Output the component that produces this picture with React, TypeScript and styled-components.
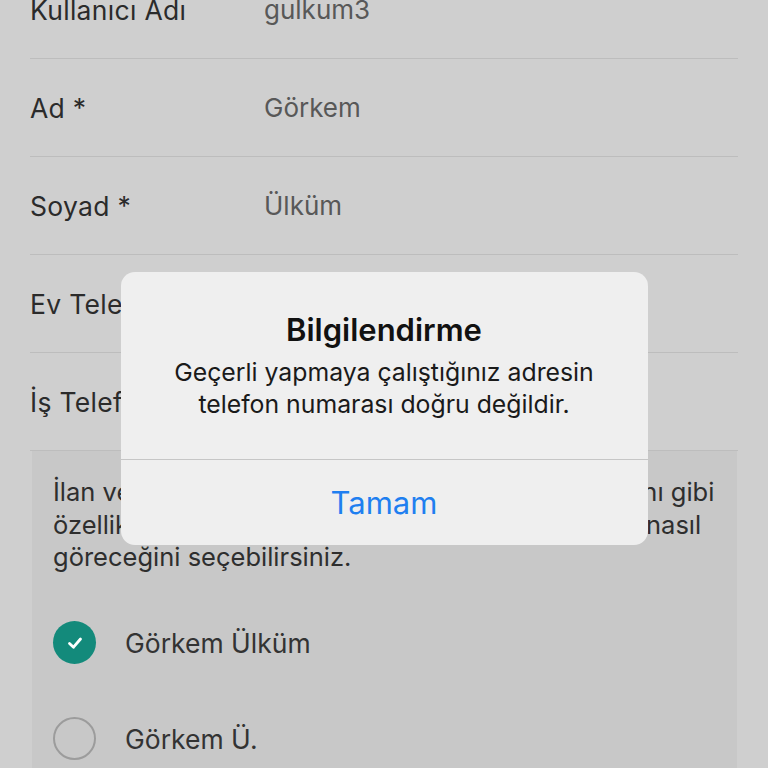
import React from 'react';
import styled, { createGlobalStyle } from 'styled-components';

const PAGE_BG = '#cfcfcf';
const PANEL_BG = '#c8c8c8';
const LINE = '#bdbdbd';
const TEAL = '#138a7b';
const IOS_BLUE = '#1f7ff0';

const GlobalStyle = createGlobalStyle`
  body {
    margin: 0;
    font-family: Inter, "Noto Sans", sans-serif;
    background: ${PAGE_BG};
  }
`;

const Screen = styled.div`
  position: relative;
  width: 768px;
  height: 768px;
  overflow: hidden;
  background: ${PAGE_BG};
`;

// list is scrolled, first row half hidden
const FormList = styled.div`
  margin-top: -39px;
  padding: 0 30px;
`;

const Row = styled.div`
  height: 97px;
  display: grid;
  grid-template-columns: 234px 1fr;
  align-items: center;
  border-bottom: 1px solid ${LINE};
`;

const Label = styled.div`
  font-size: 26.5px;
  letter-spacing: 0.3px;
  color: #2b2b2b;
`;

const Value = styled.div`
  font-size: 26px;
  color: #585858;
`;

const InfoPanel = styled.div`
  margin: 0 31px 0 32px;
  padding: 25px 21px 0;
  background: ${PANEL_BG};
`;

const Para = styled.p`
  margin: 0;
  font-size: 25.5px;
  line-height: 32.5px;
  color: #2e2e2e;
  white-space: nowrap;
`;

const Options = styled.div`
  margin-top: 21px;
`;

const Option = styled.div`
  height: 96px;
  display: flex;
  align-items: center;
  gap: 29px;
`;

const Radio = styled.div<{ checked?: boolean }>`
  width: 43px;
  height: 43px;
  box-sizing: border-box;
  border-radius: 50%;
  display: flex;
  align-items: center;
  justify-content: center;
  background: ${({ checked }) => (checked ? TEAL : 'transparent')};
  border: ${({ checked }) => (checked ? 'none' : '2px solid #9c9c9c')};
`;

const OptionText = styled.span`
  font-size: 26.5px;
  color: #333;
`;

const Overlay = styled.div`
  position: absolute;
  inset: 0;
  display: flex;
  justify-content: center;
  align-items: flex-start;
  padding-top: 272px;
`;

const Dialog = styled.div`
  width: 527px;
  border-radius: 14px;
  background: #efefef;
  overflow: hidden;
  text-align: center;
`;

const DialogBody = styled.div`
  padding: 40px 20px 39px;
  border-bottom: 1px solid #c6c6c6;
`;

const Title = styled.div`
  font-size: 31px;
  line-height: 36px;
  font-weight: 600;
  color: #111;
`;

const Message = styled.div`
  margin-top: 8px;
  font-size: 24.8px;
  line-height: 32px;
  color: #1a1a1a;
`;

const DialogButton = styled.div`
  height: 85px;
  display: flex;
  align-items: center;
  justify-content: center;
  font-size: 31px;
  color: ${IOS_BLUE};
`;

const Check = () => (
  <svg width="20" height="20" viewBox="0 0 20 20">
    <path d="M4.5 10.5 L8.5 14.2 L15.5 6" fill="none" stroke="#fff" strokeWidth="2.8" strokeLinecap="round" strokeLinejoin="round" />
  </svg>
);

const fields = [
  { label: 'Kullanıcı Adı', value: 'gulkum3' },
  { label: 'Ad *', value: 'Görkem' },
  { label: 'Soyad *', value: 'Ülküm' },
  { label: 'Ev Telefonu', value: '' },
  { label: 'İş Telefonu', value: '' },
];

const App = () => {
  return (
    <Screen>
      <GlobalStyle />
      <FormList>
        {fields.map((f) => (
          <Row key={f.label}>
            <Label>{f.label}</Label>
            <Value>{f.value}</Value>
          </Row>
        ))}
      </FormList>
      <InfoPanel>
        <Para>
          İlan ve mesajlarda adınızın ve soyadınızın tamamını gibi
          <br />
          özellikleri düzenleyerek diğer kullanıcıların sizleri nasıl
          <br />
          göreceğini seçebilirsiniz.
        </Para>
        <Options>
          <Option>
            <Radio checked>
              <Check />
            </Radio>
            <OptionText>Görkem Ülküm</OptionText>
          </Option>
          <Option>
            <Radio />
            <OptionText>Görkem Ü.</OptionText>
          </Option>
        </Options>
      </InfoPanel>
      <Overlay>
        <Dialog>
          <DialogBody>
            <Title>Bilgilendirme</Title>
            <Message>
              Geçerli yapmaya çalıştığınız adresin
              <br />
              telefon numarası doğru değildir.
            </Message>
          </DialogBody>
          <DialogButton>Tamam</DialogButton>
        </Dialog>
      </Overlay>
    </Screen>
  );
};

export default App;
